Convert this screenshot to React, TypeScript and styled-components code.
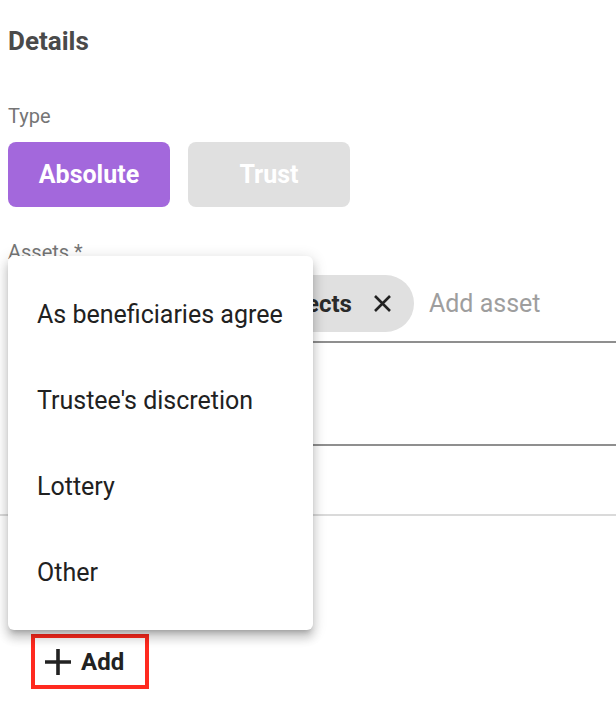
import React from "react";
import styled, { createGlobalStyle } from "styled-components";

const GlobalStyle = createGlobalStyle`
  html, body {
    margin: 0;
    padding: 0;
    background: #ffffff;
    font-family: Roboto, "Noto Sans", "Liberation Sans", sans-serif;
  }
`;

const Page = styled.div`
  position: relative;
  width: 616px;
  height: 708px;
  overflow: hidden;
  padding-top: 26px;
  box-sizing: border-box;
`;

const Section = styled.div`
  padding-left: 8px;
  display: flex;
  flex-direction: column;
`;

const Title = styled.h2`
  margin: 0;
  font-size: 26px;
  line-height: 30px;
  font-weight: 700;
  color: #4a4a4a;
`;

const Label = styled.div<{ $top: number }>`
  margin-top: ${(p) => p.$top}px;
  font-size: 20px;
  line-height: 24px;
  color: #757575;
`;

const ToggleGroup = styled.div`
  display: flex;
  gap: 18px;
  margin-top: 14px;
`;

const Toggle = styled.button<{ $active?: boolean }>`
  width: 162px;
  height: 65px;
  border: none;
  border-radius: 8px;
  background: ${(p) => (p.$active ? "#a368dc" : "#e0e0e0")};
  color: #ffffff;
  font-family: inherit;
  font-size: 25px;
  font-weight: 700;
  padding: 0;
  cursor: pointer;
`;

const InputRow = styled.div`
  display: flex;
  align-items: center;
  padding: 11px 0 9px;
  border-bottom: 2px solid #8f8f8f;
`;

const Chip = styled.div`
  display: flex;
  align-items: center;
  height: 57px;
  border-radius: 29px;
  background: #e0e0e0;
  padding: 0 22px 0 13px;
  gap: 21px;
  flex-shrink: 0;
`;

const ChipText = styled.span`
  font-size: 24px;
  font-weight: 700;
  color: #2a2a2a;
  white-space: nowrap;
`;

const Placeholder = styled.span`
  margin-left: 15px;
  font-size: 25px;
  color: #9e9e9e;
  white-space: nowrap;
`;

const SelectRow = styled.div`
  height: 57px;
  margin-top: 44px;
  border-bottom: 2px solid #8f8f8f;
`;

const Divider = styled.div`
  height: 2px;
  background: #dadada;
  margin-top: 68px;
`;

const AddButton = styled.button`
  margin: 118px 0 0 23px;
  width: 118px;
  height: 55px;
  box-sizing: border-box;
  border: 4px solid #ff2a1f;
  background: #ffffff;
  display: flex;
  align-items: center;
  padding: 0 0 0 10px;
  gap: 10px;
  font-family: inherit;
  font-size: 24px;
  font-weight: 700;
  color: #222222;
  cursor: pointer;
`;

const Menu = styled.ul`
  position: absolute;
  left: 8px;
  top: 256px;
  width: 305px;
  margin: 0;
  padding: 15px 0;
  list-style: none;
  background: #ffffff;
  border-radius: 6px;
  box-shadow: 0px 5px 5px -3px rgba(0, 0, 0, 0.2),
    0px 8px 10px 1px rgba(0, 0, 0, 0.14), 0px 3px 14px 2px rgba(0, 0, 0, 0.12);
  box-sizing: border-box;
`;

const MenuItem = styled.li`
  height: 86px;
  display: flex;
  align-items: center;
  padding-left: 29px;
  font-size: 25px;
  color: #212121;
  white-space: nowrap;
`;

const CloseIcon = () => (
  <svg width="19" height="19" viewBox="0 0 19 19" aria-hidden="true">
    <path d="M2 2 L17 17 M17 2 L2 17" stroke="#222" strokeWidth="2.6" />
  </svg>
);

const PlusIcon = () => (
  <svg width="26" height="26" viewBox="0 0 26 26" aria-hidden="true">
    <path d="M0 13 H26 M13 0 V26" stroke="#222" strokeWidth="3.6" />
  </svg>
);

const options = ["As beneficiaries agree", "Trustee's discretion", "Lottery", "Other"];

export default function App() {
  return (
    <>
      <GlobalStyle />
      <Page>
        <Section>
          <Title>Details</Title>
          <Label $top={48}>Type</Label>
          <ToggleGroup>
            <Toggle $active>Absolute</Toggle>
            <Toggle>Trust</Toggle>
          </ToggleGroup>
          <Label $top={33}>Assets *</Label>
          <InputRow>
            <Chip>
              <ChipText>Jewellery and personal effects</ChipText>
              <CloseIcon />
            </Chip>
            <Placeholder>Add asset</Placeholder>
          </InputRow>
          <SelectRow />
        </Section>
        <Divider />
        <Section>
          <AddButton>
            <PlusIcon />
            Add
          </AddButton>
        </Section>
        <Menu>
          {options.map((o) => (
            <MenuItem key={o}>{o}</MenuItem>
          ))}
        </Menu>
      </Page>
    </>
  );
}
